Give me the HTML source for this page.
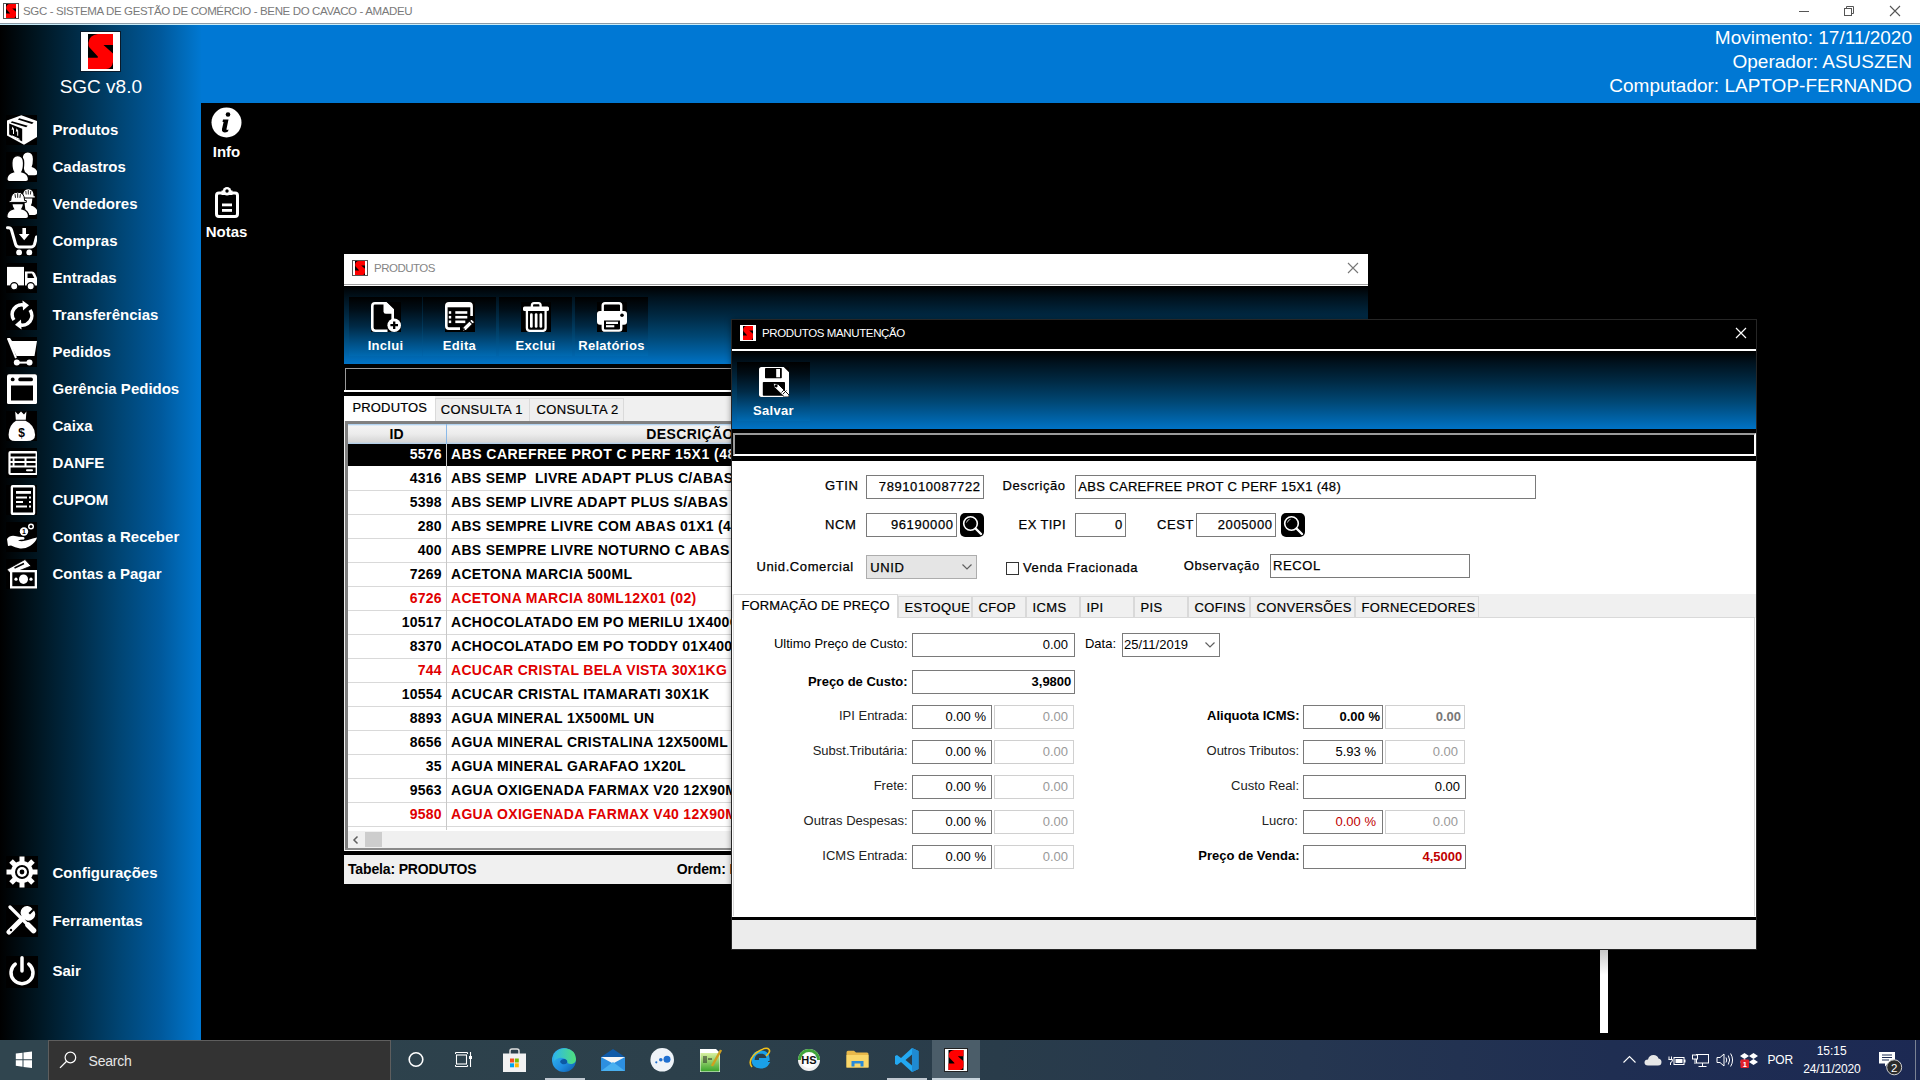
<!DOCTYPE html>
<html><head><meta charset="utf-8"><style>
html,body{margin:0;padding:0;width:1920px;height:1080px;overflow:hidden;background:#000;font-family:'Liberation Sans', sans-serif;}
</style></head><body>
<div style="position:absolute;left:0px;top:0px;width:1920px;height:23px;background:#fff"></div><div style="position:absolute;left:0px;top:23px;width:1920px;height:1px;background:#8a9aa6"></div><div style="position:absolute;left:0px;top:24px;width:1920px;height:1px;background:#c8ecf8"></div><svg style="position:absolute;left:3px;top:3px;" width="16" height="16" viewBox="0 0 16 16"><rect x="0.5" y="0.5" width="15" height="15" fill="#fff" stroke="#555" stroke-width="1"/>
<rect x="3" y="1" width="10" height="14" fill="#000"/>
<path d="M10 0H25V11H15.5L25 19.5V28Q24 35 18 35H0V23.8H9.6Q10.3 23 9.6 22.2L1.5 13.5Q0.3 12 0.4 9Q1 1 10 0Z" fill="#f00" transform="translate(3 1) scale(0.4)"/></svg><div style="position:absolute;top:6.22px;font:normal 11.5px 'Liberation Sans', sans-serif;line-height:11.5px;color:#7a7a7a;white-space:nowrap;letter-spacing:-0.37px;left:23px;">SGC - SISTEMA DE GESTÃO DE COMÉRCIO - BENE DO CAVACO - AMADEU</div><div style="position:absolute;left:1799px;top:11px;width:10px;height:1px;background:#555"></div><svg style="position:absolute;left:1843px;top:5px;" width="12" height="12" viewBox="0 0 12 12"><rect x="1.5" y="3.5" width="7" height="7" fill="none" stroke="#555"/><path d="M3.5 3.5V1.5H10.5V8.5H8.5" fill="none" stroke="#555"/></svg><svg style="position:absolute;left:1889px;top:5px;" width="12" height="12" viewBox="0 0 12 12"><path d="M1 1L11 11M11 1L1 11" stroke="#555" stroke-width="1.1"/></svg><div style="position:absolute;left:0px;top:25px;width:201px;height:1015px;background:linear-gradient(90deg,#000 0%,#001520 18%,#002b46 38%,#004574 60%,#00599c 80%,#006cbc 92%,#0078d2 100%)"></div><div style="position:absolute;left:201px;top:25px;width:1719px;height:78px;background:#0078d4"></div><div style="position:absolute;top:27.75px;font:normal 19px 'Liberation Sans', sans-serif;line-height:19px;color:#fff;white-space:nowrap;right:8px;">Movimento: 17/11/2020</div><div style="position:absolute;top:51.75px;font:normal 19px 'Liberation Sans', sans-serif;line-height:19px;color:#fff;white-space:nowrap;right:8px;">Operador: ASUSZEN</div><div style="position:absolute;top:76.35px;font:normal 19px 'Liberation Sans', sans-serif;line-height:19px;color:#fff;white-space:nowrap;right:8px;">Computador: LAPTOP-FERNANDO</div><svg style="position:absolute;left:80px;top:31px;" width="41" height="41" viewBox="0 0 41 41"><rect x="0.5" y="0.5" width="40" height="40" fill="#fff" stroke="#0a1a2a" stroke-width="1"/>
<rect x="8" y="3" width="25" height="35" fill="#000"/>
<path d="M10 0H25V11H15.5L25 19.5V28Q24 35 18 35H0V23.8H9.6Q10.3 23 9.6 22.2L1.5 13.5Q0.3 12 0.4 9Q1 1 10 0Z" fill="#f00" transform="translate(8 3)"/></svg><div style="position:absolute;top:76.60px;font:normal 19px 'Liberation Sans', sans-serif;line-height:19px;color:#fff;white-space:nowrap;left:-199.2px;width:600px;text-align:center;">SGC v8.0</div><svg style="position:absolute;left:6px;top:115px;" width="31" height="30" viewBox="0 0 31 30"><rect width="31" height="30" fill="#000"/><path d="M15.3 0.3L31 6V22L18 29.8L1 20.5V5.6Z" fill="#fff"/>
<path d="M3.2 8.6L16.2 13.8V26.6L3.2 19.4Z" fill="#000"/>
<path d="M6 6.2L21.7 10.8L20.2 12.3L4.6 7.5Z" fill="#000"/>
<path d="M13.3 3.3L27.6 7.6L26 9L11.8 4.6Z" fill="#000"/>
<path d="M6.4 11.5L8 14V19H7V14.5L5.6 15Z" fill="#fff"/>
<path d="M10.6 13.2L12.2 15.7V20.8H11.2V16.3L9.8 16.8Z" fill="#fff"/>
<path d="M5.8 20.3L13.5 23.8V25L5.8 21.5Z" fill="#fff"/></svg><div style="position:absolute;top:122.05px;font:bold 15px 'Liberation Sans', sans-serif;line-height:15px;color:#fff;white-space:nowrap;left:52.5px;">Produtos</div><svg style="position:absolute;left:6px;top:152px;" width="31" height="30" viewBox="0 0 31 30"><rect width="31" height="30" fill="#000"/><path d="M17.5 15.5Q16.7 12 16.7 7Q16.7 0.5 21.8 0.5Q26.9 0.5 26.9 7Q26.9 12 25.6 15Q31.3 17 31.3 21Q31.3 23.3 28.7 23.3H20Z" fill="#fff"/>
<path d="M0.8 27.3Q0.8 21.5 7.5 19.8Q5.8 17.5 5.8 11Q5.8 3.6 11.7 3.6Q17.6 3.6 17.6 11Q17.6 17.5 15.9 19.8Q22.6 21.5 22.6 27.3Q22.6 29.7 20 29.7H3.4Q0.8 29.7 0.8 27.3Z" fill="#fff" stroke="#000" stroke-width="1.4"/></svg><div style="position:absolute;top:159.05px;font:bold 15px 'Liberation Sans', sans-serif;line-height:15px;color:#fff;white-space:nowrap;left:52.5px;">Cadastros</div><svg style="position:absolute;left:6px;top:189px;" width="31" height="30" viewBox="0 0 31 30"><rect width="31" height="30" fill="#000"/><path d="M18 9.5H26.3Q26.3 14 24.8 16.5Q31.3 18.5 31.3 22.8Q31.3 26 28.5 26H20Z" fill="#fff"/>
<path d="M17 7.3Q17 0.3 22.3 0.3Q27.6 0.3 27.6 7.3H28.8V8.6H15.6V7.3Z" fill="#fff"/>
<path d="M22.3 1V5.5M19.8 2L20.2 5.5M24.8 2L24.4 5.5" stroke="#000" stroke-width="0.8"/>
<path d="M0.8 27.3Q0.8 21.5 7.5 19.8Q5.8 17.5 5.8 14.6H17.6Q17.6 17.5 15.9 19.8Q22.6 21.5 22.6 27.3Q22.6 29.7 20 29.7H3.4Q0.8 29.7 0.8 27.3Z" fill="#fff" stroke="#000" stroke-width="1.3"/>
<path d="M4.8 11.5Q4.8 3.2 11.7 3.2Q18.6 3.2 18.6 11.5H20.3V13.4H3.1V11.5Z" fill="#fff" stroke="#000" stroke-width="1"/>
<path d="M11.7 4.2V8.8M9 5.2L9.5 8.8M14.4 5.2L13.9 8.8" stroke="#000" stroke-width="0.9"/></svg><div style="position:absolute;top:196.05px;font:bold 15px 'Liberation Sans', sans-serif;line-height:15px;color:#fff;white-space:nowrap;left:52.5px;">Vendedores</div><svg style="position:absolute;left:6px;top:226px;" width="31" height="30" viewBox="0 0 31 30"><rect width="31" height="30" fill="#000"/><path d="M1.5 1.8Q4.5 1.2 5.5 4L9.5 18Q10.3 21 13 21H25Q27.5 21 28.5 18.5L30.5 11" fill="none" stroke="#fff" stroke-width="3" stroke-linecap="round" stroke-linejoin="round"/>
<circle cx="13.1" cy="26.4" r="2.9" fill="#fff"/><circle cx="23.3" cy="26.4" r="2.9" fill="#fff"/>
<path d="M16.4 2H20V8H23.5L18.2 14.3L12.9 8H16.4Z" fill="#fff"/></svg><div style="position:absolute;top:233.05px;font:bold 15px 'Liberation Sans', sans-serif;line-height:15px;color:#fff;white-space:nowrap;left:52.5px;">Compras</div><svg style="position:absolute;left:6px;top:263px;" width="31" height="30" viewBox="0 0 31 30"><rect width="31" height="30" fill="#000"/><rect x="1" y="3.9" width="17" height="18.5" fill="#fff"/>
<path d="M19 8.5H26Q28 8.5 29 10.5L31 15V22.5H19Z" fill="#fff"/>
<path d="M21.5 10.5H26L28.3 15H21.5Z" fill="#000"/>
<circle cx="8.2" cy="23.3" r="3.6" fill="#fff" stroke="#000" stroke-width="1.2"/>
<circle cx="24.7" cy="23.3" r="3.6" fill="#fff" stroke="#000" stroke-width="1.2"/></svg><div style="position:absolute;top:270.05px;font:bold 15px 'Liberation Sans', sans-serif;line-height:15px;color:#fff;white-space:nowrap;left:52.5px;">Entradas</div><svg style="position:absolute;left:6px;top:300px;" width="31" height="30" viewBox="0 0 31 30"><rect width="31" height="30" fill="#000"/><path d="M8 20A9.5 9.5 0 0 1 19 5.5" fill="none" stroke="#fff" stroke-width="3.6"/>
<path d="M16.5 0.5L23 5.2L17 10.5Z" fill="#fff"/>
<path d="M24 10A9.5 9.5 0 0 1 13 24.5" fill="none" stroke="#fff" stroke-width="3.6"/>
<path d="M15.5 29.5L9 24.8L15 19.5Z" fill="#fff"/></svg><div style="position:absolute;top:307.05px;font:bold 15px 'Liberation Sans', sans-serif;line-height:15px;color:#fff;white-space:nowrap;left:52.5px;">Transferências</div><svg style="position:absolute;left:6px;top:337px;" width="31" height="30" viewBox="0 0 31 30"><rect width="31" height="30" fill="#000"/><path d="M1 1H4L6 4H31L28.5 19H10.5Z" fill="#fff"/>
<path d="M2 1.5L10 21" stroke="#fff" stroke-width="2"/>
<circle cx="10.8" cy="25.6" r="3" fill="#fff"/><circle cx="23.5" cy="25.6" r="3" fill="#fff"/>
<path d="M10.8 25.6H23.5" stroke="#fff" stroke-width="2"/></svg><div style="position:absolute;top:344.05px;font:bold 15px 'Liberation Sans', sans-serif;line-height:15px;color:#fff;white-space:nowrap;left:52.5px;">Pedidos</div><svg style="position:absolute;left:6px;top:374px;" width="31" height="30" viewBox="0 0 31 30"><rect width="31" height="30" fill="#000"/><rect x="1" y="0.3" width="30" height="30" rx="2" fill="#fff"/>
<rect x="5" y="11.5" width="22" height="15" fill="#000"/>
<circle cx="6.7" cy="5.4" r="1.9" fill="#000"/>
<rect x="12.3" y="3.5" width="14.7" height="3.8" rx="1.9" fill="#000"/></svg><div style="position:absolute;top:381.05px;font:bold 15px 'Liberation Sans', sans-serif;line-height:15px;color:#fff;white-space:nowrap;left:52.5px;">Gerência Pedidos</div><svg style="position:absolute;left:6px;top:411px;" width="31" height="30" viewBox="0 0 31 30"><rect width="31" height="30" fill="#000"/><path d="M9.2 0.5L12 3.5L15 0.5L18 3.5L20.4 0.5L19.8 8.7H9.8Z" fill="#fff"/>
<path d="M10 9.7H19.5Q29 14 29.1 24Q29 30 21 30H9Q2.6 30 2.6 24Q2.6 14 10 9.7Z" fill="#fff"/>
<text x="15.5" y="25.5" text-anchor="middle" font-family="Liberation Sans" font-weight="bold" font-size="12" fill="#000">$</text></svg><div style="position:absolute;top:418.05px;font:bold 15px 'Liberation Sans', sans-serif;line-height:15px;color:#fff;white-space:nowrap;left:52.5px;">Caixa</div><svg style="position:absolute;left:6px;top:448px;" width="31" height="30" viewBox="0 0 31 30"><rect width="31" height="30" fill="#000"/><rect x="2.4" y="3.1" width="29.3" height="23.9" rx="2" fill="#fff"/>
<rect x="4.6" y="5.5" width="25" height="3" fill="#000"/>
<rect x="4.6" y="10.5" width="2" height="2.5" fill="#000"/><rect x="8.5" y="10.5" width="10" height="2.5" fill="#000"/><rect x="20.5" y="10.5" width="9" height="2.5" fill="#000"/>
<rect x="4.6" y="15" width="2" height="2.5" fill="#000"/><rect x="8.5" y="15" width="10" height="2.5" fill="#000"/><rect x="20.5" y="15" width="9" height="2.5" fill="#000"/>
<rect x="4.6" y="19.5" width="25" height="5.5" fill="#000"/>
<rect x="20" y="21.3" width="7" height="2" rx="1" fill="#fff"/></svg><div style="position:absolute;top:455.05px;font:bold 15px 'Liberation Sans', sans-serif;line-height:15px;color:#fff;white-space:nowrap;left:52.5px;">DANFE</div><svg style="position:absolute;left:6px;top:485px;" width="31" height="30" viewBox="0 0 31 30"><rect width="31" height="30" fill="#000"/><rect x="4.7" y="0.1" width="24.5" height="30" rx="2" fill="#fff"/>
<rect x="7" y="2.5" width="20" height="25" fill="#000"/>
<rect x="10" y="6" width="15" height="2.8" fill="#fff"/>
<rect x="10" y="11.5" width="11" height="2" fill="#fff"/><rect x="23" y="11.5" width="2" height="2" fill="#fff"/>
<rect x="10" y="16" width="7" height="2" fill="#fff"/><rect x="23" y="16" width="2" height="2" fill="#fff"/>
<rect x="10" y="20.5" width="11" height="2" fill="#fff"/><rect x="23" y="20.5" width="2" height="2" fill="#fff"/></svg><div style="position:absolute;top:492.05px;font:bold 15px 'Liberation Sans', sans-serif;line-height:15px;color:#fff;white-space:nowrap;left:52.5px;">CUPOM</div><svg style="position:absolute;left:6px;top:522px;" width="31" height="30" viewBox="0 0 31 30"><rect width="31" height="30" fill="#000"/><path d="M1 17Q4 13 9 14Q13 15 17 15Q19.5 15.5 18 17.5Q14 17.5 12 18.5Q16 20 22 18Q27 16 31 15.5Q30 20 24 24Q19 27 14 26.5Q9 25.5 5 23.5L2 24Z" fill="#fff"/>
<circle cx="18" cy="9.5" r="4.2" fill="#fff"/><text x="18" y="12.2" text-anchor="middle" font-family="Liberation Sans" font-weight="bold" font-size="7" fill="#000">1</text>
<circle cx="25" cy="4.5" r="3" fill="#fff"/><circle cx="25" cy="4.5" r="1.5" fill="#000"/></svg><div style="position:absolute;top:529.05px;font:bold 15px 'Liberation Sans', sans-serif;line-height:15px;color:#fff;white-space:nowrap;left:52.5px;">Contas a Receber</div><svg style="position:absolute;left:6px;top:559px;" width="31" height="30" viewBox="0 0 31 30"><rect width="31" height="30" fill="#000"/><path d="M1 10.5L19 0.5L25 7L5 15Z" fill="#fff" stroke="#000" stroke-width="0.8"/>
<rect x="4" y="11" width="27" height="18.5" fill="#fff"/>
<rect x="6.3" y="13.3" width="22.4" height="13.9" fill="#000"/>
<ellipse cx="17.5" cy="20.2" rx="4.5" ry="4.8" fill="#fff"/>
<circle cx="10" cy="20.2" r="1.6" fill="#fff"/><circle cx="25" cy="20.2" r="1.6" fill="#fff"/>
<path d="M8.5 9L18 4.5" stroke="#000" stroke-width="1.5"/></svg><div style="position:absolute;top:566.05px;font:bold 15px 'Liberation Sans', sans-serif;line-height:15px;color:#fff;white-space:nowrap;left:52.5px;">Contas a Pagar</div><svg style="position:absolute;left:6px;top:856px;" width="32" height="32" viewBox="0 0 32 32"><rect width="32" height="32" fill="#000"/><rect x="13.5" y="0.5" width="5" height="6" fill="#fff" transform="rotate(0 16 16)"/><rect x="13.5" y="0.5" width="5" height="6" fill="#fff" transform="rotate(45 16 16)"/><rect x="13.5" y="0.5" width="5" height="6" fill="#fff" transform="rotate(90 16 16)"/><rect x="13.5" y="0.5" width="5" height="6" fill="#fff" transform="rotate(135 16 16)"/><rect x="13.5" y="0.5" width="5" height="6" fill="#fff" transform="rotate(180 16 16)"/><rect x="13.5" y="0.5" width="5" height="6" fill="#fff" transform="rotate(225 16 16)"/><rect x="13.5" y="0.5" width="5" height="6" fill="#fff" transform="rotate(270 16 16)"/><rect x="13.5" y="0.5" width="5" height="6" fill="#fff" transform="rotate(315 16 16)"/><circle cx="16" cy="16" r="11" fill="#fff"/><circle cx="16" cy="16" r="7" fill="#000"/><circle cx="16" cy="16" r="5" fill="#fff"/><circle cx="16" cy="16" r="2.4" fill="#000"/></svg><div style="position:absolute;top:864.55px;font:bold 15px 'Liberation Sans', sans-serif;line-height:15px;color:#fff;white-space:nowrap;left:52.5px;">Configurações</div><svg style="position:absolute;left:6px;top:905px;" width="32" height="32" viewBox="0 0 32 32"><rect width="32" height="32" fill="#000"/><path d="M4 2L9.5 7.5L26 24" stroke="#fff" stroke-width="3.2" stroke-linecap="round"/>
<path d="M22 20L27.5 25.5" stroke="#fff" stroke-width="5.5" stroke-linecap="round"/>
<path d="M3 27L17 13" stroke="#fff" stroke-width="5" stroke-linecap="round"/>
<path d="M17.5 13A6.5 6.5 0 1 1 26.5 4L22.5 8L24 9.5L28 5.5A6.5 6.5 0 0 1 19 14.5Z" fill="#fff"/>
<circle cx="5" cy="25" r="1.2" fill="#000"/></svg><div style="position:absolute;top:913.25px;font:bold 15px 'Liberation Sans', sans-serif;line-height:15px;color:#fff;white-space:nowrap;left:52.5px;">Ferramentas</div><svg style="position:absolute;left:6px;top:956px;" width="32" height="32" viewBox="0 0 32 32"><rect width="32" height="32" fill="#000"/><path d="M9.23 8.03A11 11 0 1 0 22.77 8.03" fill="none" stroke="#fff" stroke-width="3.5" stroke-linecap="round"/>
<path d="M16 1.8V15" stroke="#fff" stroke-width="3.5" stroke-linecap="round"/></svg><div style="position:absolute;top:963.25px;font:bold 15px 'Liberation Sans', sans-serif;line-height:15px;color:#fff;white-space:nowrap;left:52.5px;">Sair</div><svg style="position:absolute;left:211px;top:107px;" width="31" height="31" viewBox="0 0 31 31"><circle cx="15.5" cy="15.5" r="15" fill="#fff"/><circle cx="17" cy="7.5" r="2.3" fill="#000"/><path d="M12 12.5H17.5L15.5 22Q15.3 23.5 17.5 22.5L17 24.5Q14 26 12 25Q10.5 24 11 22L12.6 15H11.5Z" fill="#000"/></svg><div style="position:absolute;top:144.25px;font:bold 15px 'Liberation Sans', sans-serif;line-height:15px;color:#fff;white-space:nowrap;left:-73.5px;width:600px;text-align:center;">Info</div><svg style="position:absolute;left:213px;top:186px;" width="28" height="33" viewBox="0 0 28 33"><rect x="3.5" y="7" width="21" height="23.5" rx="2.5" fill="none" stroke="#fff" stroke-width="3"/><rect x="8.5" y="4.5" width="11" height="4.5" fill="#fff"/><circle cx="14" cy="5.2" r="4.3" fill="#fff"/><circle cx="14" cy="5" r="1.7" fill="#000"/><rect x="9" y="17.5" width="10" height="2.8" fill="#fff"/><rect x="9" y="23" width="10" height="2.8" fill="#fff"/></svg><div style="position:absolute;top:224.05px;font:bold 15px 'Liberation Sans', sans-serif;line-height:15px;color:#fff;white-space:nowrap;left:-73.5px;width:600px;text-align:center;">Notas</div><div style="position:absolute;left:343px;top:254px;width:1026px;height:630px;background:#000"></div><div style="position:absolute;left:344px;top:254px;width:1024px;height:30px;background:#fff"></div><div style="position:absolute;left:344px;top:284px;width:1024px;height:1px;background:#a0a0a0"></div><div style="position:absolute;left:344px;top:285px;width:1024px;height:1px;background:#fff"></div><svg style="position:absolute;left:352px;top:260px;" width="16" height="16" viewBox="0 0 16 16"><rect x="0.5" y="0.5" width="15" height="15" fill="#fff" stroke="#555" stroke-width="1"/>
<rect x="3" y="1" width="10" height="14" fill="#000"/>
<path d="M10 0H25V11H15.5L25 19.5V28Q24 35 18 35H0V23.8H9.6Q10.3 23 9.6 22.2L1.5 13.5Q0.3 12 0.4 9Q1 1 10 0Z" fill="#f00" transform="translate(3 1) scale(0.4)"/></svg><div style="position:absolute;top:263.03px;font:normal 11.5px 'Liberation Sans', sans-serif;line-height:11.5px;color:#858585;white-space:nowrap;letter-spacing:-0.5px;left:374px;">PRODUTOS</div><svg style="position:absolute;left:1347px;top:262px;" width="12" height="12" viewBox="0 0 12 12"><path d="M1 1L11 11M11 1L1 11" stroke="#777" stroke-width="1.1"/></svg><div style="position:absolute;left:344px;top:286px;width:1024px;height:78px;background:linear-gradient(180deg,#000 0%,#00121e 15%,#002b46 40%,#004774 65%,#0062a6 87%,#0073c6 100%)"></div><div style="position:absolute;left:349px;top:297px;width:73px;height:59px;background:linear-gradient(180deg,#000 0%,#000d16 20%,#002a46 50%,#004f84 78%,#006ab2 100%)"></div><svg style="position:absolute;left:371px;top:302px;" width="30" height="30" viewBox="0 0 30 30"><rect width="30" height="30" fill="#000"/><path d="M21.7 17.5V8L15 1.3H4Q1.3 1.3 1.3 4V25.5Q1.3 28.7 4.5 28.7H16.5" fill="none" stroke="#fff" stroke-width="2.6" stroke-linejoin="round"/>
<path d="M12.5 0.2H15.5L23 7.4V11.8H14.8Q12.5 11.8 12.5 9.5Z" fill="#fff"/>
<circle cx="23.2" cy="23.2" r="6.8" fill="#fff"/>
<path d="M23.2 19.4V27M19.4 23.2H27" stroke="#000" stroke-width="2.3"/></svg><div style="position:absolute;top:338.65px;font:bold 13px 'Liberation Sans', sans-serif;line-height:13px;color:#fff;white-space:nowrap;letter-spacing:0.3px;left:85.5px;width:600px;text-align:center;">Inclui</div><div style="position:absolute;left:423px;top:297px;width:73px;height:59px;background:linear-gradient(180deg,#000 0%,#000d16 20%,#002a46 50%,#004f84 78%,#006ab2 100%)"></div><svg style="position:absolute;left:445px;top:302px;" width="30" height="30" viewBox="0 0 30 30"><rect width="30" height="30" fill="#000"/><path d="M15 26.6H4Q1.3 26.6 1.3 24V4Q1.3 1.3 4 1.3H24Q26.6 1.3 26.6 4V14" fill="none" stroke="#fff" stroke-width="2.6"/>
<rect x="1.3" y="1.3" width="25.3" height="4" fill="#fff"/>
<rect x="3.8" y="9.2" width="2.4" height="2.6" fill="#fff"/><rect x="10.3" y="9.2" width="12" height="2.6" fill="#fff"/>
<rect x="3.8" y="13.9" width="2.4" height="2.6" fill="#fff"/><rect x="10.3" y="13.9" width="12" height="2.6" fill="#fff"/>
<rect x="3.8" y="18.5" width="2.4" height="2.6" fill="#fff"/><rect x="10.3" y="18.5" width="10" height="2.6" fill="#fff"/>
<path d="M17.2 29.3L18.04 25.2L26.53 16.71L29.79 19.97L21.3 28.46Z" fill="#fff" stroke="#000" stroke-width="1.2" stroke-linejoin="round"/>
<path d="M24.41 18.83L27.67 22.09" stroke="#000" stroke-width="1.2"/>
<circle cx="18.9" cy="27.2" r="0.9" fill="#000"/></svg><div style="position:absolute;top:338.65px;font:bold 13px 'Liberation Sans', sans-serif;line-height:13px;color:#fff;white-space:nowrap;letter-spacing:0.3px;left:159.5px;width:600px;text-align:center;">Edita</div><div style="position:absolute;left:499px;top:297px;width:73px;height:59px;background:linear-gradient(180deg,#000 0%,#000d16 20%,#002a46 50%,#004f84 78%,#006ab2 100%)"></div><svg style="position:absolute;left:521px;top:302px;" width="30" height="30" viewBox="0 0 30 30"><rect width="30" height="30" fill="#000"/><path d="M10.9 5V3.6Q10.9 1.2 13 1.2H17.6Q19.6 1.2 19.6 3.6V5" fill="none" stroke="#fff" stroke-width="2.3"/>
<rect x="2" y="4.4" width="26" height="4.6" rx="1.5" fill="#fff"/>
<path d="M5.9 8.5V26Q5.9 28.9 9 28.9H21.5Q24.6 28.9 24.6 26V8.5" fill="none" stroke="#fff" stroke-width="2.3"/>
<rect x="9" y="11.3" width="2.7" height="14.4" rx="1.3" fill="#fff"/>
<rect x="13.8" y="11.3" width="2.7" height="14.4" rx="1.3" fill="#fff"/>
<rect x="18.5" y="11.3" width="2.7" height="14.4" rx="1.3" fill="#fff"/></svg><div style="position:absolute;top:338.65px;font:bold 13px 'Liberation Sans', sans-serif;line-height:13px;color:#fff;white-space:nowrap;letter-spacing:0.3px;left:235.5px;width:600px;text-align:center;">Exclui</div><div style="position:absolute;left:575px;top:297px;width:73px;height:59px;background:linear-gradient(180deg,#000 0%,#000d16 20%,#002a46 50%,#004f84 78%,#006ab2 100%)"></div><svg style="position:absolute;left:597px;top:302px;" width="30" height="30" viewBox="0 0 30 30"><rect width="30" height="30" fill="#000"/><path d="M5.7 9.5V3.5Q5.7 1.2 8 1.2H22Q24.2 1.2 24.2 3.5V9.5" fill="none" stroke="#fff" stroke-width="2.4"/>
<path d="M3 9H27Q30 9 30 12V19.7Q30 22.7 27 22.7H3Q0 22.7 0 19.7V12Q0 9 3 9Z" fill="#fff"/>
<circle cx="25" cy="13.3" r="1.8" fill="#000"/>
<path d="M5.8 17.2H24.2V26.5Q24.2 28.6 22 28.6H8Q5.8 28.6 5.8 26.5Z" fill="#000" stroke="#fff" stroke-width="2.4"/>
<rect x="9" y="19.7" width="12" height="2.3" fill="#fff"/>
<rect x="9" y="23.2" width="8.3" height="2.1" fill="#fff"/></svg><div style="position:absolute;top:338.65px;font:bold 13px 'Liberation Sans', sans-serif;line-height:13px;color:#fff;white-space:nowrap;letter-spacing:0.3px;left:311.5px;width:600px;text-align:center;">Relatórios</div><div style="position:absolute;left:345px;top:368px;width:1023px;height:23px;background:#000;border-top:1px solid #9a9a9a;border-left:1px solid #9a9a9a;box-sizing:border-box"></div><div style="position:absolute;left:344px;top:390px;width:1024px;height:2px;background:#fff"></div><div style="position:absolute;left:344px;top:396px;width:1024px;height:488px;background:#f0f0f0"></div><div style="position:absolute;left:344px;top:396px;width:91px;height:25px;background:#fff"></div><div style="position:absolute;left:435px;top:398px;width:95px;height:23px;background:#efefef;border:1px solid #dadada;border-bottom:none;box-sizing:border-box"></div><div style="position:absolute;left:529px;top:398px;width:95px;height:23px;background:#efefef;border:1px solid #dadada;border-bottom:none;box-sizing:border-box"></div><div style="position:absolute;top:400.55px;font:normal 13px 'Liberation Sans', sans-serif;line-height:13px;color:#000;white-space:nowrap;letter-spacing:0.15px;left:352.5px;-webkit-text-stroke:0.2px #000">PRODUTOS</div><div style="position:absolute;top:402.70px;font:normal 13px 'Liberation Sans', sans-serif;line-height:13px;color:#000;white-space:nowrap;letter-spacing:0.3px;left:440.8px;-webkit-text-stroke:0.2px #000">CONSULTA 1</div><div style="position:absolute;top:402.70px;font:normal 13px 'Liberation Sans', sans-serif;line-height:13px;color:#000;white-space:nowrap;letter-spacing:0.3px;left:536.6px;-webkit-text-stroke:0.2px #000">CONSULTA 2</div><div style="position:absolute;left:345px;top:421px;width:1023px;height:430px;background:#fff;border-top:3px solid #808080;border-left:3px solid #808080;box-sizing:border-box"></div><div style="position:absolute;left:348px;top:424px;width:1020px;height:20px;background:linear-gradient(180deg,#9cc8ef 0,#f4f4f4 2px,#ececec 50%,#d6d6d6 90%,#a9cdee 100%)"></div><div style="position:absolute;left:446px;top:424px;width:1px;height:20px;background:#8ab9e8"></div><div style="position:absolute;top:426.85px;font:bold 14px 'Liberation Sans', sans-serif;line-height:14px;color:#000;white-space:nowrap;left:96.5px;width:600px;text-align:center;">ID</div><div style="position:absolute;top:426.85px;font:bold 14px 'Liberation Sans', sans-serif;line-height:14px;color:#000;white-space:nowrap;letter-spacing:0.4px;left:390px;width:600px;text-align:center;">DESCRIÇÃO</div><div style="position:absolute;left:348px;top:444px;width:1020px;height:22px;background:#000"></div><div style="position:absolute;top:446.85px;font:bold 14px 'Liberation Sans', sans-serif;line-height:14px;color:#fff;white-space:nowrap;letter-spacing:0.2px;right:1478.5px;margin-right:-0.2px;">5576</div><div style="position:absolute;top:446.85px;font:bold 14px 'Liberation Sans', sans-serif;line-height:14px;color:#fff;white-space:nowrap;letter-spacing:0.47px;left:451px;">ABS CAREFREE PROT C PERF 15X1 (48)</div><div style="position:absolute;left:348px;top:490px;width:1020px;height:1px;background:#d9d9d9"></div><div style="position:absolute;top:470.85px;font:bold 14px 'Liberation Sans', sans-serif;line-height:14px;color:#000;white-space:nowrap;letter-spacing:0.2px;right:1478.5px;margin-right:-0.2px;">4316</div><div style="position:absolute;top:470.85px;font:bold 14px 'Liberation Sans', sans-serif;line-height:14px;color:#000;white-space:nowrap;letter-spacing:0.3px;left:451px;">ABS SEMP&nbsp; LIVRE ADAPT PLUS C/ABAS</div><div style="position:absolute;left:348px;top:514px;width:1020px;height:1px;background:#d9d9d9"></div><div style="position:absolute;top:494.85px;font:bold 14px 'Liberation Sans', sans-serif;line-height:14px;color:#000;white-space:nowrap;letter-spacing:0.2px;right:1478.5px;margin-right:-0.2px;">5398</div><div style="position:absolute;top:494.85px;font:bold 14px 'Liberation Sans', sans-serif;line-height:14px;color:#000;white-space:nowrap;letter-spacing:0.3px;left:451px;">ABS SEMP LIVRE ADAPT PLUS S/ABAS</div><div style="position:absolute;left:348px;top:538px;width:1020px;height:1px;background:#d9d9d9"></div><div style="position:absolute;top:518.85px;font:bold 14px 'Liberation Sans', sans-serif;line-height:14px;color:#000;white-space:nowrap;letter-spacing:0.2px;right:1478.5px;margin-right:-0.2px;">280</div><div style="position:absolute;top:518.85px;font:bold 14px 'Liberation Sans', sans-serif;line-height:14px;color:#000;white-space:nowrap;letter-spacing:0.3px;left:451px;">ABS SEMPRE LIVRE COM ABAS 01X1 (48)</div><div style="position:absolute;left:348px;top:562px;width:1020px;height:1px;background:#d9d9d9"></div><div style="position:absolute;top:542.85px;font:bold 14px 'Liberation Sans', sans-serif;line-height:14px;color:#000;white-space:nowrap;letter-spacing:0.2px;right:1478.5px;margin-right:-0.2px;">400</div><div style="position:absolute;top:542.85px;font:bold 14px 'Liberation Sans', sans-serif;line-height:14px;color:#000;white-space:nowrap;letter-spacing:0.3px;left:451px;">ABS SEMPRE LIVRE NOTURNO C ABAS</div><div style="position:absolute;left:348px;top:586px;width:1020px;height:1px;background:#d9d9d9"></div><div style="position:absolute;top:566.85px;font:bold 14px 'Liberation Sans', sans-serif;line-height:14px;color:#000;white-space:nowrap;letter-spacing:0.2px;right:1478.5px;margin-right:-0.2px;">7269</div><div style="position:absolute;top:566.85px;font:bold 14px 'Liberation Sans', sans-serif;line-height:14px;color:#000;white-space:nowrap;letter-spacing:0.3px;left:451px;">ACETONA MARCIA 500ML</div><div style="position:absolute;left:348px;top:610px;width:1020px;height:1px;background:#d9d9d9"></div><div style="position:absolute;top:590.85px;font:bold 14px 'Liberation Sans', sans-serif;line-height:14px;color:#e00000;white-space:nowrap;letter-spacing:0.2px;right:1478.5px;margin-right:-0.2px;">6726</div><div style="position:absolute;top:590.85px;font:bold 14px 'Liberation Sans', sans-serif;line-height:14px;color:#e00000;white-space:nowrap;letter-spacing:0.3px;left:451px;">ACETONA MARCIA 80ML12X01 (02)</div><div style="position:absolute;left:348px;top:634px;width:1020px;height:1px;background:#d9d9d9"></div><div style="position:absolute;top:614.85px;font:bold 14px 'Liberation Sans', sans-serif;line-height:14px;color:#000;white-space:nowrap;letter-spacing:0.2px;right:1478.5px;margin-right:-0.2px;">10517</div><div style="position:absolute;top:614.85px;font:bold 14px 'Liberation Sans', sans-serif;line-height:14px;color:#000;white-space:nowrap;letter-spacing:0.3px;left:451px;">ACHOCOLATADO EM PO MERILU 1X400G</div><div style="position:absolute;left:348px;top:658px;width:1020px;height:1px;background:#d9d9d9"></div><div style="position:absolute;top:638.85px;font:bold 14px 'Liberation Sans', sans-serif;line-height:14px;color:#000;white-space:nowrap;letter-spacing:0.2px;right:1478.5px;margin-right:-0.2px;">8370</div><div style="position:absolute;top:638.85px;font:bold 14px 'Liberation Sans', sans-serif;line-height:14px;color:#000;white-space:nowrap;letter-spacing:0.3px;left:451px;">ACHOCOLATADO EM PO TODDY 01X400</div><div style="position:absolute;left:348px;top:682px;width:1020px;height:1px;background:#d9d9d9"></div><div style="position:absolute;top:662.85px;font:bold 14px 'Liberation Sans', sans-serif;line-height:14px;color:#e00000;white-space:nowrap;letter-spacing:0.2px;right:1478.5px;margin-right:-0.2px;">744</div><div style="position:absolute;top:662.85px;font:bold 14px 'Liberation Sans', sans-serif;line-height:14px;color:#e00000;white-space:nowrap;letter-spacing:0.3px;left:451px;">ACUCAR CRISTAL BELA VISTA 30X1KG</div><div style="position:absolute;left:348px;top:706px;width:1020px;height:1px;background:#d9d9d9"></div><div style="position:absolute;top:686.85px;font:bold 14px 'Liberation Sans', sans-serif;line-height:14px;color:#000;white-space:nowrap;letter-spacing:0.2px;right:1478.5px;margin-right:-0.2px;">10554</div><div style="position:absolute;top:686.85px;font:bold 14px 'Liberation Sans', sans-serif;line-height:14px;color:#000;white-space:nowrap;letter-spacing:0.3px;left:451px;">ACUCAR CRISTAL ITAMARATI 30X1K</div><div style="position:absolute;left:348px;top:730px;width:1020px;height:1px;background:#d9d9d9"></div><div style="position:absolute;top:710.85px;font:bold 14px 'Liberation Sans', sans-serif;line-height:14px;color:#000;white-space:nowrap;letter-spacing:0.2px;right:1478.5px;margin-right:-0.2px;">8893</div><div style="position:absolute;top:710.85px;font:bold 14px 'Liberation Sans', sans-serif;line-height:14px;color:#000;white-space:nowrap;letter-spacing:0.3px;left:451px;">AGUA MINERAL 1X500ML UN</div><div style="position:absolute;left:348px;top:754px;width:1020px;height:1px;background:#d9d9d9"></div><div style="position:absolute;top:734.85px;font:bold 14px 'Liberation Sans', sans-serif;line-height:14px;color:#000;white-space:nowrap;letter-spacing:0.2px;right:1478.5px;margin-right:-0.2px;">8656</div><div style="position:absolute;top:734.85px;font:bold 14px 'Liberation Sans', sans-serif;line-height:14px;color:#000;white-space:nowrap;letter-spacing:0.3px;left:451px;">AGUA MINERAL CRISTALINA 12X500ML</div><div style="position:absolute;left:348px;top:778px;width:1020px;height:1px;background:#d9d9d9"></div><div style="position:absolute;top:758.85px;font:bold 14px 'Liberation Sans', sans-serif;line-height:14px;color:#000;white-space:nowrap;letter-spacing:0.2px;right:1478.5px;margin-right:-0.2px;">35</div><div style="position:absolute;top:758.85px;font:bold 14px 'Liberation Sans', sans-serif;line-height:14px;color:#000;white-space:nowrap;letter-spacing:0.3px;left:451px;">AGUA MINERAL GARAFAO 1X20L</div><div style="position:absolute;left:348px;top:802px;width:1020px;height:1px;background:#d9d9d9"></div><div style="position:absolute;top:782.85px;font:bold 14px 'Liberation Sans', sans-serif;line-height:14px;color:#000;white-space:nowrap;letter-spacing:0.2px;right:1478.5px;margin-right:-0.2px;">9563</div><div style="position:absolute;top:782.85px;font:bold 14px 'Liberation Sans', sans-serif;line-height:14px;color:#000;white-space:nowrap;letter-spacing:0.3px;left:451px;">AGUA OXIGENADA FARMAX V20 12X90ML</div><div style="position:absolute;left:348px;top:826px;width:1020px;height:1px;background:#d9d9d9"></div><div style="position:absolute;top:806.85px;font:bold 14px 'Liberation Sans', sans-serif;line-height:14px;color:#e00000;white-space:nowrap;letter-spacing:0.2px;right:1478.5px;margin-right:-0.2px;">9580</div><div style="position:absolute;top:806.85px;font:bold 14px 'Liberation Sans', sans-serif;line-height:14px;color:#e00000;white-space:nowrap;letter-spacing:0.3px;left:451px;">AGUA OXIGENADA FARMAX V40 12X90ML</div><div style="position:absolute;left:446px;top:444px;width:1px;height:386px;background:#c8c8c8"></div><div style="position:absolute;left:348px;top:831px;width:1020px;height:18px;background:#f0f0f0"></div><svg style="position:absolute;left:351px;top:835px;" width="10" height="10" viewBox="0 0 10 10"><path d="M6.5 1.5L3 5L6.5 8.5" fill="none" stroke="#606060" stroke-width="1.5"/></svg><div style="position:absolute;left:365px;top:832px;width:17px;height:15px;background:#cdcdcd"></div><div style="position:absolute;left:345px;top:848px;width:1023px;height:2px;background:#8a8a8a"></div><div style="position:absolute;left:345px;top:850px;width:1023px;height:1px;background:#fff"></div><div style="position:absolute;left:344px;top:851px;width:1024px;height:4px;background:#000"></div><div style="position:absolute;left:344px;top:855px;width:1024px;height:29px;background:#f0f0f0"></div><div style="position:absolute;top:861.50px;font:bold 14px 'Liberation Sans', sans-serif;line-height:14px;color:#000;white-space:nowrap;letter-spacing:-0.15px;left:348px;">Tabela: PRODUTOS</div><div style="position:absolute;top:861.50px;font:bold 14px 'Liberation Sans', sans-serif;line-height:14px;color:#000;white-space:nowrap;letter-spacing:-0.15px;left:676.8px;">Ordem: DESCRICAO</div><div style="position:absolute;left:731px;top:319px;width:1026px;height:631px;background:#000;border:1px solid #262626;box-sizing:border-box;box-shadow:0 0 6px rgba(0,0,0,0.4)"></div><svg style="position:absolute;left:740px;top:325px;" width="16" height="16" viewBox="0 0 16 16"><rect x="0.5" y="0.5" width="15" height="15" fill="#fff" stroke="#fff" stroke-width="1"/>
<rect x="3" y="1" width="10" height="14" fill="#000"/>
<path d="M10 0H25V11H15.5L25 19.5V28Q24 35 18 35H0V23.8H9.6Q10.3 23 9.6 22.2L1.5 13.5Q0.3 12 0.4 9Q1 1 10 0Z" fill="#f00" transform="translate(3 1) scale(0.4)"/></svg><div style="position:absolute;top:328.23px;font:normal 11.5px 'Liberation Sans', sans-serif;line-height:11.5px;color:#fff;white-space:nowrap;letter-spacing:-0.37px;left:762px;">PRODUTOS MANUTENÇÃO</div><svg style="position:absolute;left:1735px;top:327px;" width="12" height="12" viewBox="0 0 12 12"><path d="M1 1L11 11M11 1L1 11" stroke="#fff" stroke-width="1.2"/></svg><div style="position:absolute;left:732px;top:349px;width:1024px;height:2px;background:#fff"></div><div style="position:absolute;left:732px;top:351px;width:1024px;height:78px;background:linear-gradient(180deg,#000 0%,#00121e 15%,#002b46 40%,#004774 65%,#0062a6 87%,#0073c6 100%)"></div><div style="position:absolute;left:737px;top:362px;width:73px;height:59px;background:linear-gradient(180deg,#000 0%,#000d16 20%,#002a46 50%,#004f84 78%,#006ab2 100%)"></div><svg style="position:absolute;left:759px;top:367px;" width="30" height="30" viewBox="0 0 30 30"><rect width="30" height="30" fill="#000"/><path d="M2.5 0H24.7L30 5.3V27.5Q30 30 27.5 30H2.5Q0 30 0 27.5V2.5Q0 0 2.5 0Z" fill="#fff"/>
<rect x="6" y="1" width="16.8" height="10.3" rx="0.8" fill="#000"/>
<rect x="17.2" y="2" width="3.8" height="8.3" fill="#fff"/>
<rect x="3.8" y="15" width="22.2" height="13.7" rx="0.8" fill="#000"/>
<path d="M14.2 16L19.5 17.5L30 28V30H25.5L15.5 20.5Z" fill="#fff" stroke="#000" stroke-width="0.9"/>
<circle cx="17.2" cy="19" r="1.4" fill="#000"/>
<path d="M22.5 25.5L26 22M24 27L27.5 23.5" stroke="#000" stroke-width="0.9"/></svg><div style="position:absolute;top:403.75px;font:bold 13px 'Liberation Sans', sans-serif;line-height:13px;color:#fff;white-space:nowrap;letter-spacing:0.3px;left:473.5px;width:600px;text-align:center;">Salvar</div><div style="position:absolute;left:733px;top:433px;width:1023px;height:23px;background:#000;border-top:2px solid #9a9a9a;border-left:2px solid #9a9a9a;border-right:2px solid #fff;border-bottom:2px solid #fff;box-sizing:border-box"></div><div style="position:absolute;left:732px;top:461px;width:1024px;height:456px;background:#fff"></div><div style="position:absolute;left:732px;top:917px;width:1024px;height:3px;background:#000"></div><div style="position:absolute;left:732px;top:920px;width:1024px;height:29px;background:#ececec"></div><div style="position:absolute;left:1600px;top:950px;width:8px;height:83px;background:linear-gradient(180deg,#c8c8c8 0,#fff 30%,#fff 100%)"></div><div style="position:absolute;left:866px;top:475px;width:118px;height:24px;background:#fff;border:1px solid #7a7a7a;box-sizing:border-box"></div><div style="position:absolute;top:478.75px;font:normal 13px 'Liberation Sans', sans-serif;line-height:13px;color:#000;white-space:nowrap;letter-spacing:0.6px;left:825px;-webkit-text-stroke:0.25px #000">GTIN</div><div style="position:absolute;top:479.75px;font:normal 13px 'Liberation Sans', sans-serif;line-height:13px;color:#000;white-space:nowrap;letter-spacing:0.6px;right:940px;margin-right:-0.6px;-webkit-text-stroke:0.25px #000">7891010087722</div><div style="position:absolute;top:478.75px;font:normal 13px 'Liberation Sans', sans-serif;line-height:13px;color:#000;white-space:nowrap;letter-spacing:0.6px;left:1002.5px;-webkit-text-stroke:0.25px #000">Descrição</div><div style="position:absolute;left:1075px;top:475px;width:461px;height:24px;background:#fff;border:1px solid #7a7a7a;box-sizing:border-box"></div><div style="position:absolute;top:479.75px;font:normal 13px 'Liberation Sans', sans-serif;line-height:13px;color:#000;white-space:nowrap;letter-spacing:0.32px;left:1078.3px;-webkit-text-stroke:0.25px #000">ABS CAREFREE PROT C PERF 15X1 (48)</div><div style="position:absolute;left:866px;top:513px;width:91px;height:24px;background:#fff;border:1px solid #7a7a7a;box-sizing:border-box"></div><div style="position:absolute;top:517.85px;font:normal 13px 'Liberation Sans', sans-serif;line-height:13px;color:#000;white-space:nowrap;letter-spacing:0.6px;left:825px;-webkit-text-stroke:0.25px #000">NCM</div><div style="position:absolute;top:518.45px;font:normal 13px 'Liberation Sans', sans-serif;line-height:13px;color:#000;white-space:nowrap;letter-spacing:0.6px;right:967px;margin-right:-0.6px;-webkit-text-stroke:0.25px #000">96190000</div><svg style="position:absolute;left:960px;top:513px;" width="24" height="24" viewBox="0 0 24 24"><rect x="0" y="0" width="24" height="24" rx="5" fill="#000"/><circle cx="10.5" cy="10.5" r="6.8" fill="none" stroke="#fff" stroke-width="1.6"/><path d="M15.5 15.5L21 21" stroke="#fff" stroke-width="2.4" stroke-linecap="round"/><path d="M6.5 9.5A4.5 4.5 0 0 1 9.5 6.3" stroke="#fff" stroke-width="0.8" fill="none"/></svg><div style="position:absolute;top:517.85px;font:normal 13px 'Liberation Sans', sans-serif;line-height:13px;color:#000;white-space:nowrap;letter-spacing:0.39999999999999997px;left:1018.6px;-webkit-text-stroke:0.25px #000">EX TIPI</div><div style="position:absolute;left:1075px;top:513px;width:51px;height:24px;background:#fff;border:1px solid #7a7a7a;box-sizing:border-box"></div><div style="position:absolute;top:518.45px;font:normal 13px 'Liberation Sans', sans-serif;line-height:13px;color:#000;white-space:nowrap;right:797.7px;-webkit-text-stroke:0.25px #000">0</div><div style="position:absolute;top:517.85px;font:normal 13px 'Liberation Sans', sans-serif;line-height:13px;color:#000;white-space:nowrap;letter-spacing:0.6px;left:1157px;-webkit-text-stroke:0.25px #000">CEST</div><div style="position:absolute;left:1196px;top:513px;width:80px;height:24px;background:#fff;border:1px solid #7a7a7a;box-sizing:border-box"></div><div style="position:absolute;top:518.45px;font:normal 13px 'Liberation Sans', sans-serif;line-height:13px;color:#000;white-space:nowrap;letter-spacing:0.6px;right:648px;margin-right:-0.6px;-webkit-text-stroke:0.25px #000">2005000</div><svg style="position:absolute;left:1281px;top:513px;" width="24" height="24" viewBox="0 0 24 24"><rect x="0" y="0" width="24" height="24" rx="5" fill="#000"/><circle cx="10.5" cy="10.5" r="6.8" fill="none" stroke="#fff" stroke-width="1.6"/><path d="M15.5 15.5L21 21" stroke="#fff" stroke-width="2.4" stroke-linecap="round"/><path d="M6.5 9.5A4.5 4.5 0 0 1 9.5 6.3" stroke="#fff" stroke-width="0.8" fill="none"/></svg><div style="position:absolute;top:560.45px;font:normal 13px 'Liberation Sans', sans-serif;line-height:13px;color:#000;white-space:nowrap;letter-spacing:0.6px;left:756.5px;-webkit-text-stroke:0.25px #000">Unid.Comercial</div><div style="position:absolute;left:866px;top:555px;width:111px;height:24px;background:#e5e5e5;border:1px solid #adadad;box-sizing:border-box"></div><div style="position:absolute;top:560.95px;font:normal 13px 'Liberation Sans', sans-serif;line-height:13px;color:#000;white-space:nowrap;letter-spacing:0.6px;left:870.2px;-webkit-text-stroke:0.25px #000">UNID</div><svg style="position:absolute;left:961px;top:563px;" width="12" height="8" viewBox="0 0 12 8"><path d="M1.5 1.5L6 6L10.5 1.5" fill="none" stroke="#606060" stroke-width="1.2"/></svg><div style="position:absolute;left:1006px;top:562px;width:13px;height:13px;background:#fff;border:1px solid #333;box-sizing:border-box"></div><div style="position:absolute;top:561.45px;font:normal 13px 'Liberation Sans', sans-serif;line-height:13px;color:#000;white-space:nowrap;letter-spacing:0.6px;left:1023px;-webkit-text-stroke:0.25px #000">Venda Fracionada</div><div style="position:absolute;top:559.45px;font:normal 13px 'Liberation Sans', sans-serif;line-height:13px;color:#000;white-space:nowrap;letter-spacing:0.6px;left:1183.7px;-webkit-text-stroke:0.25px #000">Observação</div><div style="position:absolute;left:1270px;top:554px;width:200px;height:24px;background:#fff;border:1px solid #7a7a7a;box-sizing:border-box"></div><div style="position:absolute;top:558.95px;font:normal 13px 'Liberation Sans', sans-serif;line-height:13px;color:#000;white-space:nowrap;letter-spacing:0.6px;left:1273px;-webkit-text-stroke:0.25px #000">RECOL</div><div style="position:absolute;left:732px;top:594px;width:1024px;height:24px;background:#f0f0f0"></div><div style="position:absolute;left:733px;top:594px;width:165px;height:24px;background:#fff;border:1px solid #d9d9d9;border-bottom:none;box-sizing:border-box"></div><div style="position:absolute;left:898px;top:596px;width:74px;height:22px;background:#f0f0f0;border:1px solid #d9d9d9;border-bottom:none;box-sizing:border-box"></div><div style="position:absolute;top:600.55px;font:normal 13px 'Liberation Sans', sans-serif;line-height:13px;color:#000;white-space:nowrap;letter-spacing:0.35px;left:904.5px;-webkit-text-stroke:0.2px #000">ESTOQUE</div><div style="position:absolute;left:972px;top:596px;width:54px;height:22px;background:#f0f0f0;border:1px solid #d9d9d9;border-bottom:none;box-sizing:border-box"></div><div style="position:absolute;top:600.55px;font:normal 13px 'Liberation Sans', sans-serif;line-height:13px;color:#000;white-space:nowrap;letter-spacing:0.35px;left:978.5px;-webkit-text-stroke:0.2px #000">CFOP</div><div style="position:absolute;left:1026px;top:596px;width:54px;height:22px;background:#f0f0f0;border:1px solid #d9d9d9;border-bottom:none;box-sizing:border-box"></div><div style="position:absolute;top:600.55px;font:normal 13px 'Liberation Sans', sans-serif;line-height:13px;color:#000;white-space:nowrap;letter-spacing:0.35px;left:1032.5px;-webkit-text-stroke:0.2px #000">ICMS</div><div style="position:absolute;left:1080px;top:596px;width:54px;height:22px;background:#f0f0f0;border:1px solid #d9d9d9;border-bottom:none;box-sizing:border-box"></div><div style="position:absolute;top:600.55px;font:normal 13px 'Liberation Sans', sans-serif;line-height:13px;color:#000;white-space:nowrap;letter-spacing:0.35px;left:1086.5px;-webkit-text-stroke:0.2px #000">IPI</div><div style="position:absolute;left:1134px;top:596px;width:54px;height:22px;background:#f0f0f0;border:1px solid #d9d9d9;border-bottom:none;box-sizing:border-box"></div><div style="position:absolute;top:600.55px;font:normal 13px 'Liberation Sans', sans-serif;line-height:13px;color:#000;white-space:nowrap;letter-spacing:0.35px;left:1140.5px;-webkit-text-stroke:0.2px #000">PIS</div><div style="position:absolute;left:1188px;top:596px;width:62px;height:22px;background:#f0f0f0;border:1px solid #d9d9d9;border-bottom:none;box-sizing:border-box"></div><div style="position:absolute;top:600.55px;font:normal 13px 'Liberation Sans', sans-serif;line-height:13px;color:#000;white-space:nowrap;letter-spacing:0.35px;left:1194.5px;-webkit-text-stroke:0.2px #000">COFINS</div><div style="position:absolute;left:1250px;top:596px;width:105px;height:22px;background:#f0f0f0;border:1px solid #d9d9d9;border-bottom:none;box-sizing:border-box"></div><div style="position:absolute;top:600.55px;font:normal 13px 'Liberation Sans', sans-serif;line-height:13px;color:#000;white-space:nowrap;letter-spacing:0.35px;left:1256.5px;-webkit-text-stroke:0.2px #000">CONVERSÕES</div><div style="position:absolute;left:1355px;top:596px;width:124px;height:22px;background:#f0f0f0;border:1px solid #d9d9d9;border-bottom:none;box-sizing:border-box"></div><div style="position:absolute;top:600.55px;font:normal 13px 'Liberation Sans', sans-serif;line-height:13px;color:#000;white-space:nowrap;letter-spacing:0.35px;left:1361.5px;-webkit-text-stroke:0.2px #000">FORNECEDORES</div><div style="position:absolute;top:598.75px;font:normal 13px 'Liberation Sans', sans-serif;line-height:13px;color:#000;white-space:nowrap;letter-spacing:0.1px;left:741.5px;-webkit-text-stroke:0.2px #000">FORMAÇÃO DE PREÇO</div><div style="position:absolute;left:898px;top:617px;width:857px;height:1px;background:#d9d9d9"></div><div style="position:absolute;left:733px;top:617px;width:1px;height:299px;background:#d9d9d9"></div><div style="position:absolute;left:1754px;top:617px;width:1px;height:299px;background:#d9d9d9"></div><div style="position:absolute;top:637.35px;font:normal 13px 'Liberation Sans', sans-serif;line-height:13px;color:#000;white-space:nowrap;right:1012.4px;">Ultimo Preço de Custo:</div><div style="position:absolute;left:912px;top:633px;width:163px;height:24px;background:#fff;border:1px solid #7a7a7a;box-sizing:border-box"></div><div style="position:absolute;top:638.45px;font:normal 13px 'Liberation Sans', sans-serif;line-height:13px;color:#000;white-space:nowrap;right:852px;">0.00</div><div style="position:absolute;top:637.35px;font:normal 13px 'Liberation Sans', sans-serif;line-height:13px;color:#000;white-space:nowrap;right:804px;">Data:</div><div style="position:absolute;left:1122px;top:633px;width:98px;height:24px;background:#fff;border:1px solid #7a7a7a;box-sizing:border-box"></div><div style="position:absolute;top:638.45px;font:normal 13px 'Liberation Sans', sans-serif;line-height:13px;color:#000;white-space:nowrap;left:1124px;">25/11/2019</div><svg style="position:absolute;left:1204px;top:641px;" width="12" height="8" viewBox="0 0 12 8"><path d="M1.5 1.5L6 6L10.5 1.5" fill="none" stroke="#606060" stroke-width="1.2"/></svg><div style="position:absolute;top:674.95px;font:bold 13px 'Liberation Sans', sans-serif;line-height:13px;color:#000;white-space:nowrap;right:1012.4px;">Preço de Custo:</div><div style="position:absolute;left:912px;top:670px;width:163px;height:24px;background:#fff;border:1px solid #7a7a7a;box-sizing:border-box"></div><div style="position:absolute;top:675.45px;font:bold 13px 'Liberation Sans', sans-serif;line-height:13px;color:#000;white-space:nowrap;right:848.7px;">3,9800</div><div style="position:absolute;top:709.45px;font:normal 13px 'Liberation Sans', sans-serif;line-height:13px;color:#222;white-space:nowrap;right:1012.4px;">IPI Entrada:</div><div style="position:absolute;left:912px;top:705px;width:80px;height:24px;background:#fff;border:1px solid #7a7a7a;box-sizing:border-box"></div><div style="position:absolute;top:710.25px;font:normal 13px 'Liberation Sans', sans-serif;line-height:13px;color:#000;white-space:nowrap;right:934px;">0.00 %</div><div style="position:absolute;left:994px;top:705px;width:80px;height:24px;background:#fff;border:1px solid #d0d0d0;box-sizing:border-box"></div><div style="position:absolute;top:710.25px;font:normal 13px 'Liberation Sans', sans-serif;line-height:13px;color:#999;white-space:nowrap;right:852px;">0.00</div><div style="position:absolute;top:744.45px;font:normal 13px 'Liberation Sans', sans-serif;line-height:13px;color:#222;white-space:nowrap;right:1012.4px;">Subst.Tributária:</div><div style="position:absolute;left:912px;top:740px;width:80px;height:24px;background:#fff;border:1px solid #7a7a7a;box-sizing:border-box"></div><div style="position:absolute;top:745.25px;font:normal 13px 'Liberation Sans', sans-serif;line-height:13px;color:#000;white-space:nowrap;right:934px;">0.00 %</div><div style="position:absolute;left:994px;top:740px;width:80px;height:24px;background:#fff;border:1px solid #d0d0d0;box-sizing:border-box"></div><div style="position:absolute;top:745.25px;font:normal 13px 'Liberation Sans', sans-serif;line-height:13px;color:#999;white-space:nowrap;right:852px;">0.00</div><div style="position:absolute;top:779.45px;font:normal 13px 'Liberation Sans', sans-serif;line-height:13px;color:#222;white-space:nowrap;right:1012.4px;">Frete:</div><div style="position:absolute;left:912px;top:775px;width:80px;height:24px;background:#fff;border:1px solid #7a7a7a;box-sizing:border-box"></div><div style="position:absolute;top:780.25px;font:normal 13px 'Liberation Sans', sans-serif;line-height:13px;color:#000;white-space:nowrap;right:934px;">0.00 %</div><div style="position:absolute;left:994px;top:775px;width:80px;height:24px;background:#fff;border:1px solid #d0d0d0;box-sizing:border-box"></div><div style="position:absolute;top:780.25px;font:normal 13px 'Liberation Sans', sans-serif;line-height:13px;color:#999;white-space:nowrap;right:852px;">0.00</div><div style="position:absolute;top:814.45px;font:normal 13px 'Liberation Sans', sans-serif;line-height:13px;color:#222;white-space:nowrap;right:1012.4px;">Outras Despesas:</div><div style="position:absolute;left:912px;top:810px;width:80px;height:24px;background:#fff;border:1px solid #7a7a7a;box-sizing:border-box"></div><div style="position:absolute;top:815.25px;font:normal 13px 'Liberation Sans', sans-serif;line-height:13px;color:#000;white-space:nowrap;right:934px;">0.00 %</div><div style="position:absolute;left:994px;top:810px;width:80px;height:24px;background:#fff;border:1px solid #d0d0d0;box-sizing:border-box"></div><div style="position:absolute;top:815.25px;font:normal 13px 'Liberation Sans', sans-serif;line-height:13px;color:#999;white-space:nowrap;right:852px;">0.00</div><div style="position:absolute;top:849.45px;font:normal 13px 'Liberation Sans', sans-serif;line-height:13px;color:#222;white-space:nowrap;right:1012.4px;">ICMS Entrada:</div><div style="position:absolute;left:912px;top:845px;width:80px;height:24px;background:#fff;border:1px solid #7a7a7a;box-sizing:border-box"></div><div style="position:absolute;top:850.25px;font:normal 13px 'Liberation Sans', sans-serif;line-height:13px;color:#000;white-space:nowrap;right:934px;">0.00 %</div><div style="position:absolute;left:994px;top:845px;width:80px;height:24px;background:#fff;border:1px solid #d0d0d0;box-sizing:border-box"></div><div style="position:absolute;top:850.25px;font:normal 13px 'Liberation Sans', sans-serif;line-height:13px;color:#999;white-space:nowrap;right:852px;">0.00</div><div style="position:absolute;top:709.45px;font:bold 13px 'Liberation Sans', sans-serif;line-height:13px;color:#000;white-space:nowrap;right:620.5px;">Aliquota ICMS:</div><div style="position:absolute;left:1303px;top:705px;width:80px;height:24px;background:#fff;border:1px solid #7a7a7a;box-sizing:border-box"></div><div style="position:absolute;top:710.25px;font:bold 13px 'Liberation Sans', sans-serif;line-height:13px;color:#000;white-space:nowrap;right:540px;">0.00 %</div><div style="position:absolute;left:1385px;top:705px;width:80px;height:24px;background:#fff;border:1px solid #d0d0d0;box-sizing:border-box"></div><div style="position:absolute;top:710.25px;font:bold 13px 'Liberation Sans', sans-serif;line-height:13px;color:#777;white-space:nowrap;right:459px;">0.00</div><div style="position:absolute;top:744.45px;font:normal 13px 'Liberation Sans', sans-serif;line-height:13px;color:#222;white-space:nowrap;right:621px;">Outros Tributos:</div><div style="position:absolute;left:1303px;top:740px;width:80px;height:24px;background:#fff;border:1px solid #7a7a7a;box-sizing:border-box"></div><div style="position:absolute;top:745.25px;font:normal 13px 'Liberation Sans', sans-serif;line-height:13px;color:#000;white-space:nowrap;right:544px;">5.93 %</div><div style="position:absolute;left:1385px;top:740px;width:80px;height:24px;background:#fff;border:1px solid #d0d0d0;box-sizing:border-box"></div><div style="position:absolute;top:745.25px;font:normal 13px 'Liberation Sans', sans-serif;line-height:13px;color:#999;white-space:nowrap;right:462px;">0.00</div><div style="position:absolute;top:779.45px;font:normal 13px 'Liberation Sans', sans-serif;line-height:13px;color:#222;white-space:nowrap;right:621px;">Custo Real:</div><div style="position:absolute;left:1303px;top:775px;width:163px;height:24px;background:#fff;border:1px solid #7a7a7a;box-sizing:border-box"></div><div style="position:absolute;top:780.25px;font:normal 13px 'Liberation Sans', sans-serif;line-height:13px;color:#000;white-space:nowrap;right:460px;">0.00</div><div style="position:absolute;top:814.45px;font:normal 13px 'Liberation Sans', sans-serif;line-height:13px;color:#222;white-space:nowrap;right:622.2px;">Lucro:</div><div style="position:absolute;left:1303px;top:810px;width:80px;height:24px;background:#fff;border:1px solid #7a7a7a;box-sizing:border-box"></div><div style="position:absolute;top:815.25px;font:normal 13px 'Liberation Sans', sans-serif;line-height:13px;color:#c00000;white-space:nowrap;right:544px;">0.00 %</div><div style="position:absolute;left:1385px;top:810px;width:80px;height:24px;background:#fff;border:1px solid #d0d0d0;box-sizing:border-box"></div><div style="position:absolute;top:815.25px;font:normal 13px 'Liberation Sans', sans-serif;line-height:13px;color:#999;white-space:nowrap;right:462px;">0.00</div><div style="position:absolute;top:849.45px;font:bold 13px 'Liberation Sans', sans-serif;line-height:13px;color:#000;white-space:nowrap;right:620.5px;">Preço de Venda:</div><div style="position:absolute;left:1303px;top:845px;width:163px;height:24px;background:#fff;border:1px solid #7a7a7a;box-sizing:border-box"></div><div style="position:absolute;top:850.25px;font:bold 13px 'Liberation Sans', sans-serif;line-height:13px;color:#c00000;white-space:nowrap;right:457.79999999999995px;">4,5000</div><div style="position:absolute;left:0px;top:1040px;width:1920px;height:40px;background:linear-gradient(90deg,#2f444e 0%,#2c404b 35%,#293c4a 52%,#253650 68%,#1f2e52 84%,#1c2953 100%)"></div><div style="position:absolute;left:0px;top:1040px;width:48px;height:40px;background:#30454f"></div><div style="position:absolute;left:48px;top:1040px;width:343px;height:40px;background:#333;border:1px solid #5e5e5e;border-bottom:none;box-sizing:border-box"></div><svg style="position:absolute;left:15px;top:1051px;" width="18" height="18" viewBox="0 0 18 18"><path d="M0.8 2.6L7.5 1.7V8.2H0.8Z M8.5 1.5L17 0.4V8.2H8.5Z M0.8 9.2H7.5V15.7L0.8 14.8Z M8.5 9.2H17V17L8.5 15.9Z" fill="#fff"/></svg><svg style="position:absolute;left:58px;top:1050px;" width="20" height="20" viewBox="0 0 20 20"><circle cx="12.4" cy="7.5" r="5.3" fill="none" stroke="#fff" stroke-width="1.2"/><path d="M8.6 11.3L2 17.9" stroke="#fff" stroke-width="1.3"/></svg><div style="position:absolute;top:1054.10px;font:normal 14px 'Liberation Sans', sans-serif;line-height:14px;color:#e6e6e6;white-space:nowrap;letter-spacing:-0.2px;left:88.5px;">Search</div><svg style="position:absolute;left:407px;top:1051px;" width="18" height="18" viewBox="0 0 18 18"><circle cx="9" cy="8.5" r="6.8" fill="none" stroke="#fff" stroke-width="1.6"/></svg><svg style="position:absolute;left:455px;top:1051px;" width="18" height="17" viewBox="0 0 18 17"><rect x="1.5" y="4" width="10" height="9" fill="none" stroke="#fff" stroke-width="1.1"/><path d="M0.5 1.5H12.5M0.5 15.5H12.5M0.5 1.5V3M12.5 1.5V3M0.5 14V15.5M12.5 14V15.5" stroke="#fff" stroke-width="1.1"/><path d="M15.5 1V16" stroke="#fff" stroke-width="1.1"/><rect x="14" y="5" width="3" height="3" fill="#fff"/></svg><svg style="position:absolute;left:502px;top:1048px;" width="25" height="25" viewBox="0 0 25 25"><path d="M8 6V3Q8 1 10 1H15Q17 1 17 3V6" fill="none" stroke="#e0e0e0" stroke-width="1.5"/><rect x="1" y="5.5" width="23" height="18.5" fill="#f2f2f2"/><rect x="8" y="10.5" width="4" height="4" fill="#f25022"/><rect x="12.8" y="10.5" width="4" height="4" fill="#7fba00"/><rect x="8" y="15.3" width="4" height="4" fill="#00a4ef"/><rect x="12.8" y="15.3" width="4" height="4" fill="#ffb900"/></svg><svg style="position:absolute;left:551px;top:1047px;" width="26" height="26" viewBox="0 0 26 26"><defs><linearGradient id="eg" x1="0" y1="0" x2="1" y2="1"><stop offset="0" stop-color="#35c1f1"/><stop offset="0.6" stop-color="#1f8be0"/><stop offset="1" stop-color="#0c59a4"/></linearGradient><linearGradient id="eg2" x1="0" y1="0" x2="1" y2="0"><stop offset="0" stop-color="#2fb8e8"/><stop offset="1" stop-color="#50e07a"/></linearGradient></defs><circle cx="13" cy="13" r="12" fill="url(#eg)"/><path d="M3 9Q7 1 15 1.5Q24 2.5 25 12Q25 16 21 17Q16 17.5 16 14Q13 10 8 11Q5 12 3 14Z" fill="url(#eg2)"/><path d="M9 15Q10 11.5 14 12Q17 13 16 16Q14 18 11 17Z" fill="#0c59a4"/></svg><svg style="position:absolute;left:600px;top:1048px;" width="26" height="24" viewBox="0 0 26 24"><path d="M1 9L13 1L25 9Z" fill="#0f5aa8"/><rect x="1" y="9" width="24" height="14" fill="#2d8fe0"/><path d="M1 9H25L13 15.5Z" fill="#f5f5f5"/><path d="M1 23L13 14L25 23Z" fill="#49b0f0"/></svg><svg style="position:absolute;left:650px;top:1048px;" width="25" height="25" viewBox="0 0 25 25"><circle cx="12.2" cy="11.8" r="11.8" fill="#eef3f8"/><circle cx="17" cy="11.2" r="3.5" fill="#1e6fd0"/><circle cx="10.8" cy="11.8" r="1.8" fill="#1e6fd0"/><circle cx="6.3" cy="14.3" r="1.1" fill="#1e6fd0"/></svg><svg style="position:absolute;left:699px;top:1047px;" width="24" height="26" viewBox="0 0 24 26"><path d="M1 2H17L21 6V25H1Z" fill="#fff"/><defs><linearGradient id="np" x1="0" y1="0" x2="0" y2="1"><stop offset="0" stop-color="#d8f0a0"/><stop offset="1" stop-color="#3aa42a"/></linearGradient></defs><rect x="1.5" y="6" width="19" height="18.5" fill="url(#np)"/><path d="M5 9V16M7 9V16M9 12H13" stroke="#222" stroke-width="1"/><path d="M13 19L22 3" stroke="#d0a020" stroke-width="2.5"/></svg><svg style="position:absolute;left:748px;top:1047px;" width="24" height="24" viewBox="0 0 24 24"><path d="M11 12.5H20Q20.5 5.5 13 5Q6 5 5 12Q5 19.5 12.5 20Q17.5 20 19.5 16.5H15.5Q14.5 17.5 12.5 17.5Q9 17.5 8.5 14.5H20" fill="none" stroke="#1aa0e8" stroke-width="3.2"/><path d="M4 20Q-1 14 8 6Q18 -1 21 2.5Q23 5 18 9" fill="none" stroke="#f3c018" stroke-width="1.6"/></svg><svg style="position:absolute;left:797px;top:1048px;" width="24" height="24" viewBox="0 0 24 24"><circle cx="12" cy="12" r="11" fill="#f0f0f0"/><path d="M1 12A11 11 0 0 1 23 12Z" fill="#3fa53a"/><circle cx="12" cy="12" r="8" fill="#fff"/><circle cx="12" cy="12" r="8" fill="none" stroke="#46b040" stroke-width="0"/><text x="12" y="16.2" text-anchor="middle" font-family="Liberation Sans" font-weight="bold" font-size="11" fill="#111">HS</text></svg><svg style="position:absolute;left:846px;top:1050px;" width="23" height="19" viewBox="0 0 23 19"><path d="M0.5 2.5Q0.5 0.8 2 0.8H8L10 2.5H21Q22.5 2.5 22.5 4V17.5H0.5Z" fill="#e8b84a"/><rect x="0.5" y="5" width="22" height="12.5" fill="#fad76a"/><path d="M5.5 16.5V11H17.5V16.5H14.5V13.5H8.5V16.5Z" fill="#2a8ad8"/></svg><svg style="position:absolute;left:894px;top:1047px;" width="25" height="26" viewBox="0 0 25 26"><path d="M18 1L24.5 4V22L18 25L7 15L3 18L1 17V9L3 8L7 11ZM18 7.5L11.5 13L18 18.5Z" fill="#23a9f2"/><path d="M18 1L24.5 4V22L18 25Z" fill="#1f8ad2"/></svg><div style="position:absolute;left:932px;top:1040px;width:48px;height:40px;background:#4b5d69"></div><svg style="position:absolute;left:944px;top:1048px;" width="24" height="24" viewBox="0 0 24 24"><rect x="0.5" y="0.5" width="23" height="23" fill="#fff" stroke="#222"/><rect x="4.5" y="2" width="15" height="20" fill="#000"/><path d="M10 0H25V11H15.5L25 19.5V28Q24 35 18 35H0V23.8H9.6Q10.3 23 9.6 22.2L1.5 13.5Q0.3 12 0.4 9Q1 1 10 0Z" fill="#f00" transform="translate(4.5 2) scale(0.6 0.5714)"/></svg><div style="position:absolute;left:545px;top:1078px;width:40px;height:2px;background:#c0c8d0"></div><div style="position:absolute;left:887px;top:1078px;width:40px;height:2px;background:#c0c8d0"></div><div style="position:absolute;left:932px;top:1078px;width:48px;height:2px;background:#c8d4dc"></div><svg style="position:absolute;left:1622px;top:1055px;" width="15" height="9" viewBox="0 0 15 9"><path d="M1.5 7.5L7.5 1.5L13.5 7.5" fill="none" stroke="#fff" stroke-width="1.1"/></svg><svg style="position:absolute;left:1644px;top:1054px;" width="18" height="12" viewBox="0 0 18 12"><path d="M4 11.5Q0.5 11.5 0.5 8.5Q0.5 5.5 4 5.5Q5 1 9.5 1Q13.5 1 14.5 4.5Q17.5 5 17.5 8Q17.5 11.5 14 11.5Z" fill="#e6e6e6"/></svg><svg style="position:absolute;left:1668px;top:1053px;" width="18" height="13" viewBox="0 0 18 13"><path d="M1 3.5V6.5M3.5 3.5V6.5M0.5 6.5H4.5Q4.5 9.5 2.5 9.5V12" fill="none" stroke="#fff" stroke-width="1"/><rect x="6" y="4.5" width="10" height="7" fill="none" stroke="#fff" stroke-width="1"/><rect x="16" y="6.5" width="1.5" height="3" fill="#fff"/><rect x="7.5" y="6" width="7" height="4" fill="#fff"/></svg><svg style="position:absolute;left:1692px;top:1053px;" width="18" height="15" viewBox="0 0 18 15"><rect x="4.5" y="1.5" width="12" height="8.5" fill="none" stroke="#fff" stroke-width="1"/><path d="M10.5 10V13.5M6.5 13.5H14.5" stroke="#fff" stroke-width="1"/><rect x="0.5" y="2" width="5" height="4" fill="#1f2e53" stroke="#fff" stroke-width="1"/><path d="M3 6V11" stroke="#fff" stroke-width="1"/></svg><svg style="position:absolute;left:1716px;top:1052px;" width="18" height="16" viewBox="0 0 18 16"><path d="M1 5.5H4L8 2V14L4 10.5H1Z" fill="none" stroke="#fff" stroke-width="1"/><path d="M10 5.5Q11.5 8 10 10.5M12.3 3.5Q15 8 12.3 12.5M14.6 1.5Q18.5 8 14.6 14.5" fill="none" stroke="#fff" stroke-width="1"/></svg><svg style="position:absolute;left:1740px;top:1052px;" width="18" height="17" viewBox="0 0 18 17"><path d="M4 1L8.5 4L4 7L-0.5 4Z M13 1L17.5 4L13 7L8.5 4Z M4 7L8.5 10L4 13L-0.5 10Z M13 7L17.5 10L13 13L8.5 10Z" fill="#fff" transform="translate(0.5 0)"/><rect x="0.5" y="7.5" width="8.5" height="8.5" rx="1" fill="#e0202a"/><text x="4.75" y="14.5" text-anchor="middle" font-family="Liberation Sans" font-weight="bold" font-size="7.5" fill="#fff">1</text></svg><div style="position:absolute;top:1053.80px;font:normal 12px 'Liberation Sans', sans-serif;line-height:12px;color:#fff;white-space:nowrap;letter-spacing:-0.2px;left:1767.5px;">POR</div><div style="position:absolute;top:1044.50px;font:normal 12px 'Liberation Sans', sans-serif;line-height:12px;color:#fff;white-space:nowrap;left:1531.7px;width:600px;text-align:center;">15:15</div><div style="position:absolute;top:1062.50px;font:normal 12px 'Liberation Sans', sans-serif;line-height:12px;color:#fff;white-space:nowrap;letter-spacing:-0.2px;left:1531.9px;width:600px;text-align:center;">24/11/2020</div><svg style="position:absolute;left:1876px;top:1050px;" width="28" height="28" viewBox="0 0 28 28"><path d="M3 2H19V13.5H12L9 16.5V13.5H3Z" fill="#fff"/><path d="M6 5H16M6 7.5H16M6 10H13" stroke="#1f2e53" stroke-width="1"/><circle cx="18.2" cy="17.3" r="7.5" fill="#2b2b2b" stroke="#d0d0d0" stroke-width="1"/><text x="18.2" y="21.5" text-anchor="middle" font-family="Liberation Sans" font-size="11.5" fill="#fff">2</text></svg><div style="position:absolute;left:1915px;top:1040px;width:1px;height:40px;background:#7a8294"></div>
</body></html>
